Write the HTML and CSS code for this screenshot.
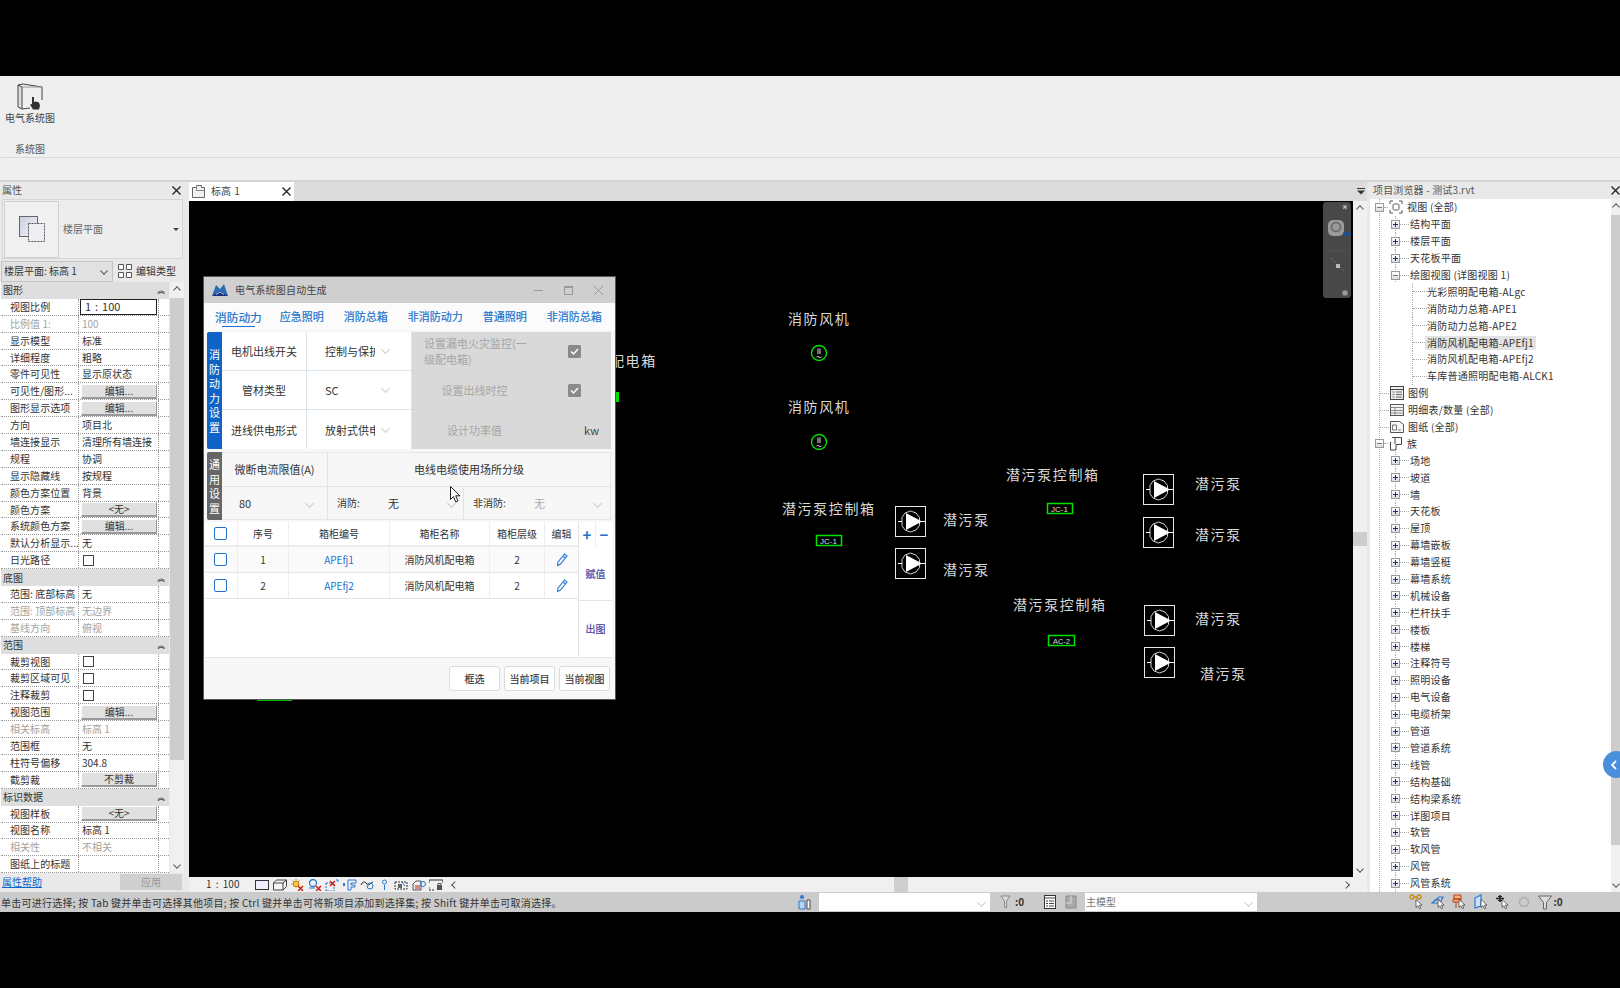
FILE: index.html
```html
<!DOCTYPE html>
<html lang="zh">
<head>
<meta charset="utf-8">
<title>电气系统图</title>
<link rel="stylesheet" href="styles.css">
</head>
<body>
<svg class="defs" width="0" height="0">
  <defs>
    <symbol id="pump" viewBox="0 0 31 31">
      <rect x=".5" y=".5" width="30" height="30" fill="#000" stroke="#e8e8e8"/>
      <path d="M15.5 5l5.5 2 3.5 4.5v8L21 24l-5.5 2-5.5-2-3-4.500v-8L10 7z" fill="none" stroke="#e8e8e8" stroke-width=".9"/>
      <path d="M11 7l16 8.500L11 24z" fill="#fff"/>
      <path d="M3 15.500h4M26 15.500h4" stroke="#fff"/>
    </symbol>
    <symbol id="motor" viewBox="0 0 18 18">
      <circle cx="9" cy="9" r="7.500" fill="none" stroke="#00e000" stroke-width="1.400"/>
      <path d="M8 4.500v5.500M10 4.500v5.500M6.500 13q1.200-1 2.500 0t2.500 0" fill="none" stroke="#ddd"/>
    </symbol>
    <symbol id="i-view" viewBox="0 0 14 14"><path d="M1 4V1h3M10 1h3v3M13 10v3h-3M4 13H1v-3" fill="none" stroke="#555"/><rect x="4" y="4" width="6" height="6" rx="1.500" fill="none" stroke="#555"/></symbol>
    <symbol id="i-legend" viewBox="0 0 14 14"><rect x=".5" y=".5" width="13" height="13" fill="#eee" stroke="#444"/><path d="M.5 3.500h13" stroke="#444"/><path d="M2.500 6h2M6 6h6M2.500 8.500h2M6 8.500h6M2.500 11h2M6 11h6" stroke="#666"/></symbol>
    <symbol id="i-sched" viewBox="0 0 14 14"><rect x=".5" y="1.500" width="13" height="11" fill="#f5f5f5" stroke="#555"/><path d="M.5 4.500h13M.5 7.500h13M.5 10h13M5 4.500v8" stroke="#888"/></symbol>
    <symbol id="i-sheet" viewBox="0 0 14 14"><path d="M.5 1.500h9l4 3v8H.5z" fill="#f7f7f7" stroke="#555"/><path d="M2.500 5h4v5h-4zM8 10h3" fill="none" stroke="#777"/></symbol>
    <symbol id="i-fam" viewBox="0 0 14 14"><path d="M3 .5h9.500v7H7V13H1.500V5" fill="#fff" stroke="#444"/><path d="M6 .5V7" stroke="#444"/></symbol>
    <symbol id="pick" viewBox="0 0 8 11"><path d="M1 .5v8l2-1.800 1.400 3 1.400-.6-1.400-3h2.600z" fill="#fff" stroke="#333" stroke-width=".7"/></symbol>
    <symbol id="check" viewBox="0 0 13 13"><rect width="13" height="13" rx="1.500" fill="#8a8a8a"/><path d="M3 6.500l2.500 2.500 4.500-5" fill="none" stroke="#fff" stroke-width="1.300"/></symbol>
    <symbol id="pen" viewBox="0 0 12 14"><path d="M8.500 1l2.500 2-6.500 8-3 1.500.4-3.300zM7 3l2.500 2" fill="none" stroke="#2a78d0" stroke-width="1.100"/></symbol>
  </defs>
</svg>

<div class="app">
  <div class="blackbar"></div>

  <header class="ribbon">
    <div class="ribbon-body">
      <div class="ribbon-tool">
        <svg class="ribbon-icon" viewBox="0 0 26 27"><path d="M1 2v22l4 2V4z" fill="#ddd" stroke="#444"/><path d="M1 2l5-1 19 3M5 26l8-1M25 4v13" fill="none" stroke="#444"/><path d="M5 4l20 0" stroke="#999"/><path d="M15 14h2v5l2-.5 3 1 1 3-1 4h-6l-3-5 2-.5z" fill="#333"/></svg>
        <span>电气系统图</span>
      </div>
    </div>
    <div class="ribbon-caption">系统图</div>
  </header>

  <div class="workspace">
    <aside class="props">
      <div class="panel-head"><span>属性</span><svg class="x" viewBox="0 0 9 9"><path d="M.5.5l8 8M8.500.5l-8 8" stroke="#222" stroke-width="1.300"/></svg></div>
      <div class="type-box">
        <div class="type-thumb">
          <svg class="type-icon" viewBox="0 0 26 26"><defs><linearGradient id="tg" x1="0" y1="0" x2="1" y2="1"><stop offset="0" stop-color="#c7cede"/><stop offset="1" stop-color="#f4f5f8"/></linearGradient></defs><rect x=".5" y=".5" width="18" height="20" fill="url(#tg)" stroke="#666"/><rect x="9.500" y="7.500" width="16" height="18" fill="#eceef2" stroke="#555" stroke-dasharray="2 1"/></svg>
        </div>
        <span class="type-name">楼层平面</span>
        <i class="tri"></i>
      </div>
      <div class="type-row">
        <div class="combo"><span>楼层平面: 标高 1</span><i class="chev"></i></div>
        <svg class="edit-icon" viewBox="0 0 14 14"><path d="M.5.5h5v5h-5zM8.500.5h5v5h-5zM.5 8.500h5v5h-5zM8.500 8.500h5v5h-5z" fill="#fff" stroke="#555"/></svg>
        <span class="edit-type">编辑类型</span>
      </div>
      <div class="props-main">
        <div class="grid">
          <div class="sec"><span>图形</span><b>︽</b></div>
          <div class="pr"><label>视图比例</label><div class="val sel">1 : 100</div></div>
          <div class="pr off"><label>比例值 1:</label><div class="val">100</div></div>
          <div class="pr"><label>显示模型</label><div class="val">标准</div></div>
          <div class="pr"><label>详细程度</label><div class="val">粗略</div></div>
          <div class="pr"><label>零件可见性</label><div class="val">显示原状态</div></div>
          <div class="pr"><label>可见性/图形...</label><div class="val"><button>编辑...</button></div></div>
          <div class="pr"><label>图形显示选项</label><div class="val"><button>编辑...</button></div></div>
          <div class="pr"><label>方向</label><div class="val">项目北</div></div>
          <div class="pr"><label>墙连接显示</label><div class="val">清理所有墙连接</div></div>
          <div class="pr"><label>规程</label><div class="val">协调</div></div>
          <div class="pr"><label>显示隐藏线</label><div class="val">按规程</div></div>
          <div class="pr"><label>颜色方案位置</label><div class="val">背景</div></div>
          <div class="pr"><label>颜色方案</label><div class="val"><button>&lt;无&gt;</button></div></div>
          <div class="pr"><label>系统颜色方案</label><div class="val"><button>编辑...</button></div></div>
          <div class="pr"><label>默认分析显示...</label><div class="val">无</div></div>
          <div class="pr"><label>日光路径</label><div class="val"><i class="cb"></i></div></div>
          <div class="sec"><span>底图</span><b>︽</b></div>
          <div class="pr"><label>范围: 底部标高</label><div class="val">无</div></div>
          <div class="pr off"><label>范围: 顶部标高</label><div class="val">无边界</div></div>
          <div class="pr off"><label>基线方向</label><div class="val">俯视</div></div>
          <div class="sec"><span>范围</span><b>︽</b></div>
          <div class="pr"><label>裁剪视图</label><div class="val"><i class="cb"></i></div></div>
          <div class="pr"><label>裁剪区域可见</label><div class="val"><i class="cb"></i></div></div>
          <div class="pr"><label>注释裁剪</label><div class="val"><i class="cb"></i></div></div>
          <div class="pr"><label>视图范围</label><div class="val"><button>编辑...</button></div></div>
          <div class="pr off"><label>相关标高</label><div class="val">标高 1</div></div>
          <div class="pr"><label>范围框</label><div class="val">无</div></div>
          <div class="pr"><label>柱符号偏移</label><div class="val">304.8</div></div>
          <div class="pr"><label>截剪裁</label><div class="val"><button>不剪裁</button></div></div>
          <div class="sec"><span>标识数据</span><b>︽</b></div>
          <div class="pr"><label>视图样板</label><div class="val"><button>&lt;无&gt;</button></div></div>
          <div class="pr"><label>视图名称</label><div class="val">标高 1</div></div>
          <div class="pr off"><label>相关性</label><div class="val">不相关</div></div>
          <div class="pr"><label>图纸上的标题</label><div class="val"></div></div>
        </div>
        <div class="scroll props-scroll">
          <i class="chev up"></i>
          <div class="props-thumb"></div>
          <i class="chev"></i>
        </div>
      </div>
      <div class="props-foot"><a>属性帮助</a><span class="apply">应用</span></div>
    </aside>

    <main class="center">
      <div class="tabbar">
        <div class="tab">
          <svg class="tab-icon" viewBox="0 0 13 13"><path d="M.5 2.500h4v-2h5v2h3v10H.5z" fill="#eef0f4" stroke="#666"/><path d="M4.500.5v5h8" fill="none" stroke="#888"/></svg>
          <span>标高 1</span>
          <svg class="x" viewBox="0 0 9 9"><path d="M.5.5l8 8M8.500.5l-8 8" stroke="#222" stroke-width="1.300"/></svg>
        </div>
        <svg class="tab-menu" viewBox="0 0 8 7"><path d="M0 .5h8" stroke="#333"/><path d="M0 2.500h8L4 6.500z" fill="#333"/></svg>
      </div>
      <div class="view-row">
        <div class="canvas">
          <svg class="drawing" viewBox="189 201 1164 676">
            <g class="cad">
              <text x="610" y="366">配电箱</text>
              <text x="788" y="324">消防风机</text>
              <text x="788" y="412">消防风机</text>
              <text x="782" y="514">潜污泵控制箱</text>
              <text x="1006" y="480">潜污泵控制箱</text>
              <text x="1013" y="610">潜污泵控制箱</text>
              <text x="943" y="525">潜污泵</text>
              <text x="943" y="575">潜污泵</text>
              <text x="1195" y="489">潜污泵</text>
              <text x="1195" y="540">潜污泵</text>
              <text x="1195" y="624">潜污泵</text>
              <text x="1200" y="679">潜污泵</text>
            </g>
            <rect x="615" y="392" width="4" height="10" fill="#00e000"/>
            <rect x="257" y="699" width="35" height="2" fill="#00c000"/>
            <use href="#motor" x="810" y="344" width="18" height="18"/>
            <use href="#motor" x="810" y="433" width="18" height="18"/>
            <g class="tagbox">
              <rect x="816.500" y="535.500" width="25" height="10"/>
              <rect x="1047.500" y="503.500" width="25" height="10"/>
              <rect x="1048.500" y="635.500" width="26" height="10"/>
            </g>
            <g class="tagtext">
              <text x="820" y="544" textLength="17" lengthAdjust="spacingAndGlyphs">JC-1</text>
              <text x="1051" y="512" textLength="17" lengthAdjust="spacingAndGlyphs">JC-1</text>
              <text x="1053" y="644" textLength="17" lengthAdjust="spacingAndGlyphs">AC-2</text>
            </g>
            <use href="#pump" x="895" y="506" width="31" height="31"/>
            <use href="#pump" x="895" y="548" width="31" height="31"/>
            <use href="#pump" x="1143" y="474" width="31" height="31"/>
            <use href="#pump" x="1143" y="517" width="31" height="31"/>
            <use href="#pump" x="1144" y="605" width="31" height="31"/>
            <use href="#pump" x="1144" y="647" width="31" height="31"/>
          </svg>

          <div class="navwheel">
            <svg viewBox="0 0 28 96"><circle cx="22" cy="5" r="2.500" fill="#777"/><path d="M20.500 3.500l3 3M23.500 3.500l-3 3" stroke="#ddd" stroke-width=".7"/><rect x="5" y="18" width="16" height="16" rx="5" fill="#9a9a9a"/><circle cx="13" cy="25" r="4.500" fill="none" stroke="#666" stroke-width="1.500"/><path d="M20 32h8" stroke="#1c4f9a" stroke-width="3"/><path d="M4 49h20" stroke="#555"/><path d="M8 56l14 14" stroke="#777" stroke-dasharray="2 2"/><rect x="13" y="62" width="4" height="4" fill="#bbb"/><circle cx="22" cy="91" r="3" fill="#777"/><path d="M20 90h4M20 92h4" stroke="#ddd" stroke-width=".7"/></svg>
          </div>

          <section class="dialog">
            <div class="dlg-title">
              <svg class="dlg-logo" viewBox="0 0 16 13"><path d="M0 12L4 1l4 4 4-5 4 12z" fill="#2a6db5"/><path d="M0 12l8-5 8 5z" fill="#1d2f80"/><path d="M4 10.500l4-2.500 4 2.500" fill="none" stroke="#fff" stroke-width=".7"/></svg>
              <span class="dlg-name">电气系统图自动生成</span>
              <svg class="win-btn" viewBox="0 0 9 9"><path d="M0 4.500h9" stroke="#999"/></svg>
              <svg class="win-btn" viewBox="0 0 9 9"><rect x=".5" y=".5" width="8" height="8" fill="none" stroke="#999"/><path d="M.5 1.500h8" stroke="#999"/></svg>
              <svg class="win-btn" viewBox="0 0 9 9"><path d="M0 0l9 9M9 0L0 9" stroke="#999"/></svg>
            </div>
            <nav class="dlg-tabs">
              <a class="active">消防动力</a><a>应急照明</a><a>消防总箱</a><a>非消防动力</a><a>普通照明</a><a>非消防总箱</a>
            </nav>
            <div class="sec1">
              <div class="strip blue"><span>消</span><span>防</span><span>动</span><span>力</span><span>设</span><span>置</span></div>
              <div class="cell">电机出线开关</div>
              <div class="cell sel-cell"><span class="clip">控制与保护</span><i class="chev light"></i></div>
              <div class="cell dis left">设置漏电火灾监控(一级配电箱)</div>
              <div class="cell dis"><svg class="chk" viewBox="0 0 13 13"><use href="#check"/></svg></div>
              <div class="cell">管材类型</div>
              <div class="cell sel-cell"><span class="clip">SC</span><i class="chev light"></i></div>
              <div class="cell dis">设置出线时控</div>
              <div class="cell dis"><svg class="chk" viewBox="0 0 13 13"><use href="#check"/></svg></div>
              <div class="cell">进线供电形式</div>
              <div class="cell sel-cell"><span class="clip">放射式供电</span><i class="chev light"></i></div>
              <div class="cell dis">设计功率值</div>
              <div class="cell dis kw">kw</div>
            </div>
            <div class="sec2">
              <div class="strip gray"><span>通</span><span>用</span><span>设</span><span>置</span></div>
              <div class="g-body">
                <div class="g-top">
                  <div class="gc c1">微断电流限值(A)</div>
                  <div class="gc c2">电线电缆使用场所分级</div>
                </div>
                <div class="g-bot">
                  <div class="gc c1 num"><span>80</span><i class="chev light"></i></div>
                  <div class="gc c3"><small>消防:</small><span>无</span><i class="chev light"></i></div>
                  <div class="gc c4"><small>非消防:</small><span class="fade">无</span><i class="chev light"></i></div>
                </div>
              </div>
            </div>
            <div class="tbl">
              <div class="tbl-main">
                <div class="tr th"><div><i class="bluecb"></i></div><div>序号</div><div>箱柜编号</div><div>箱柜名称</div><div>箱柜层级</div><div>编辑</div></div>
                <div class="tr alt"><div><i class="bluecb"></i></div><div>1</div><div class="lnk">APEfj1</div><div>消防风机配电箱</div><div>2</div><div><svg class="pen" viewBox="0 0 12 14"><use href="#pen"/></svg></div></div>
                <div class="tr"><div><i class="bluecb"></i></div><div>2</div><div class="lnk">APEfj2</div><div>消防风机配电箱</div><div>2</div><div><svg class="pen" viewBox="0 0 12 14"><use href="#pen"/></svg></div></div>
              </div>
              <div class="tbl-side">
                <div class="pm"><span>+</span><span>−</span></div>
                <div class="act a1">赋值</div>
                <div class="act a2">出图</div>
              </div>
            </div>
            <div class="dlg-foot"><button>框选</button><button>当前项目</button><button>当前视图</button></div>
            <svg class="cursor" viewBox="0 0 11 17"><path d="M.5.500v13l3-3 2.200 5.500 2.300-1-2.300-5.200h4.300z" fill="#fff" stroke="#222"/></svg>
          </section>
        </div>
        <div class="scroll v-scroll"><i class="chev up"></i><div class="v-thumb"></div><i class="chev"></i></div>
      </div>
      <div class="viewbar">
        <span class="scale">1 : 100</span>
        <div class="vb-icons">
          <svg viewBox="0 0 14 10"><rect x=".5" y=".5" width="13" height="9" fill="#eef" stroke="#333"/></svg>
          <svg viewBox="0 0 14 11"><path d="M.5 3.500h9.500v7H.5zM.5 3.500l3-3h10l-3.500 3M10 10.500l3.500-3.500V.5" fill="#f4f4f4" stroke="#444"/></svg>
          <svg viewBox="0 0 14 12"><circle cx="6" cy="5" r="3" fill="#f6c445" stroke="#c08000"/><path d="M6 0v1M1 5h1M2.500 1.500l1 1M9.500 1.500l-1 1" stroke="#c08000"/><path d="M8 7l5 5M13 7l-5 5" stroke="#d02010" stroke-width="1.500"/></svg>
          <svg viewBox="0 0 14 12"><circle cx="5" cy="4" r="3.500" fill="none" stroke="#2a78d0" stroke-width="1.300"/><path d="M1 9h6" stroke="#2a78d0"/><path d="M8 7l5 5M13 7l-5 5" stroke="#d02010" stroke-width="1.500"/></svg>
          <svg viewBox="0 0 14 12"><path d="M1 4h8v8H1z" fill="none" stroke="#2a78d0" stroke-dasharray="2 1"/><path d="M5 2l5 5M10 2l-5 5" stroke="#d02010" stroke-width="1.500"/><path d="M11 1h2v2" stroke="#2a78d0" fill="none"/></svg>
          <svg viewBox="0 0 14 12"><path d="M0 4h2v3H0z" fill="#2a78d0"/><path d="M5 1h8v3h-5v2h4v2h-4v3H5z" fill="none" stroke="#2a78d0"/></svg>
          <svg viewBox="0 0 14 12"><path d="M1 6q2-5 5-2t3 2 4-3" fill="none" stroke="#333"/><circle cx="10" cy="7" r="3" fill="none" stroke="#2a78d0"/></svg>
          <svg class="narrow" viewBox="0 0 5 12"><path d="M2.500 11V6" stroke="#2a78d0"/><circle cx="2.500" cy="3" r="2" fill="none" stroke="#2a78d0"/></svg>
          <svg viewBox="0 0 14 12"><path d="M1 3h12v7H1z" fill="none" stroke="#333" stroke-dasharray="2 1"/><path d="M4 5h4v4H4z" fill="#666"/><path d="M8 3l3 4" stroke="#2a78d0"/></svg>
          <svg viewBox="0 0 14 12"><path d="M1 11V5l3-3h5v9z" fill="none" stroke="#555"/><path d="M3 7h5M3 9h5" stroke="#c02010"/><circle cx="11" cy="5" r="2.500" fill="none" stroke="#2a78d0"/></svg>
          <svg viewBox="0 0 14 12"><path d="M0 1h14M0 1v3M14 1v3" fill="none" stroke="#333"/><path d="M0 8v3h5" stroke="#333" fill="none" stroke-dasharray="2 1"/><rect x="8" y="6" width="5" height="5" fill="#555"/><path d="M9 6V4.500h3V6" fill="none" stroke="#555"/></svg>
        </div>
        <i class="chev left"></i>
        <div class="h-track"><div class="h-thumb"></div></div>
        <i class="chev right"></i>
      </div>
    </main>

    <aside class="browser">
      <div class="br-head"><span>项目浏览器 - 测试3.rvt</span><svg class="x" viewBox="0 0 9 9"><path d="M.5.5l8 8M8.500.5l-8 8" stroke="#222" stroke-width="1.300"/></svg></div>
      <div class="br-body">
        <div class="tree">
          <div class="node n1"><i class="tog minus"></i><i class="dash s"></i><svg class="ti" viewBox="0 0 14 14"><use href="#i-view"/></svg><span>视图 (全部)</span></div>
          <div class="node n2"><i class="tog"></i><i class="dash"></i><span>结构平面</span></div>
          <div class="node n2"><i class="tog"></i><i class="dash"></i><span>楼层平面</span></div>
          <div class="node n2"><i class="tog"></i><i class="dash"></i><span>天花板平面</span></div>
          <div class="node n2"><i class="tog minus"></i><i class="dash"></i><span>绘图视图 (详图视图 1)</span></div>
          <div class="node n3"><i class="dash long"></i><span>光彩照明配电箱-ALgc</span></div>
          <div class="node n3"><i class="dash long"></i><span>消防动力总箱-APE1</span></div>
          <div class="node n3"><i class="dash long"></i><span>消防动力总箱-APE2</span></div>
          <div class="node n3"><i class="dash long"></i><span class="hl">消防风机配电箱-APEfj1</span></div>
          <div class="node n3"><i class="dash long"></i><span>消防风机配电箱-APEfj2</span></div>
          <div class="node n3"><i class="dash long"></i><span>车库普通照明配电箱-ALCK1</span></div>
          <div class="node n0"><i class="dash w"></i><svg class="ti" viewBox="0 0 14 14"><use href="#i-legend"/></svg><span>图例</span></div>
          <div class="node n0"><i class="dash w"></i><svg class="ti" viewBox="0 0 14 14"><use href="#i-sched"/></svg><span>明细表/数量 (全部)</span></div>
          <div class="node n0"><i class="dash w"></i><svg class="ti" viewBox="0 0 14 14"><use href="#i-sheet"/></svg><span>图纸 (全部)</span></div>
          <div class="node n1"><i class="tog minus"></i><i class="dash s"></i><svg class="ti" viewBox="0 0 14 14"><use href="#i-fam"/></svg><span>族</span></div>
          <div class="node n2"><i class="tog"></i><i class="dash"></i><span>场地</span></div>
          <div class="node n2"><i class="tog"></i><i class="dash"></i><span>坡道</span></div>
          <div class="node n2"><i class="tog"></i><i class="dash"></i><span>墙</span></div>
          <div class="node n2"><i class="tog"></i><i class="dash"></i><span>天花板</span></div>
          <div class="node n2"><i class="tog"></i><i class="dash"></i><span>屋顶</span></div>
          <div class="node n2"><i class="tog"></i><i class="dash"></i><span>幕墙嵌板</span></div>
          <div class="node n2"><i class="tog"></i><i class="dash"></i><span>幕墙竖梃</span></div>
          <div class="node n2"><i class="tog"></i><i class="dash"></i><span>幕墙系统</span></div>
          <div class="node n2"><i class="tog"></i><i class="dash"></i><span>机械设备</span></div>
          <div class="node n2"><i class="tog"></i><i class="dash"></i><span>栏杆扶手</span></div>
          <div class="node n2"><i class="tog"></i><i class="dash"></i><span>楼板</span></div>
          <div class="node n2"><i class="tog"></i><i class="dash"></i><span>楼梯</span></div>
          <div class="node n2"><i class="tog"></i><i class="dash"></i><span>注释符号</span></div>
          <div class="node n2"><i class="tog"></i><i class="dash"></i><span>照明设备</span></div>
          <div class="node n2"><i class="tog"></i><i class="dash"></i><span>电气设备</span></div>
          <div class="node n2"><i class="tog"></i><i class="dash"></i><span>电缆桥架</span></div>
          <div class="node n2"><i class="tog"></i><i class="dash"></i><span>管道</span></div>
          <div class="node n2"><i class="tog"></i><i class="dash"></i><span>管道系统</span></div>
          <div class="node n2"><i class="tog"></i><i class="dash"></i><span>线管</span></div>
          <div class="node n2"><i class="tog"></i><i class="dash"></i><span>结构基础</span></div>
          <div class="node n2"><i class="tog"></i><i class="dash"></i><span>结构梁系统</span></div>
          <div class="node n2"><i class="tog"></i><i class="dash"></i><span>详图项目</span></div>
          <div class="node n2"><i class="tog"></i><i class="dash"></i><span>软管</span></div>
          <div class="node n2"><i class="tog"></i><i class="dash"></i><span>软风管</span></div>
          <div class="node n2"><i class="tog"></i><i class="dash"></i><span>风管</span></div>
          <div class="node n2"><i class="tog"></i><i class="dash"></i><span>风管系统</span></div>
        </div>
        <div class="scroll br-scroll"><i class="chev up"></i><div class="br-thumb"></div><i class="chev"></i></div>
      </div>
    </aside>
  </div>

  <footer class="status">
    <span class="hint">单击可进行选择; 按 Tab 键并单击可选择其他项目; 按 Ctrl 键并单击可将新项目添加到选择集; 按 Shift 键并单击可取消选择。</span>
    <svg class="st-i work" viewBox="0 0 14 16"><circle cx="5" cy="3" r="2" fill="#2a78d0"/><path d="M2 15V7h6v8z" fill="#bcd4ee" stroke="#2a78d0"/><path d="M10 6h3v9h-3z" fill="#fff" stroke="#444"/></svg>
    <div class="st-input w1"><i class="chev light"></i></div>
    <svg class="st-i f1" viewBox="0 0 11 14"><path d="M1 1h9l-3.500 5v7L4.500 12V6z" fill="#ddd" stroke="#888"/></svg>
    <span class="st-n s1">:0</span>
    <svg class="st-i d1" viewBox="0 0 12 14"><rect x=".5" y=".5" width="11" height="13" fill="#fff" stroke="#333"/><path d="M.5 3h11M2 6h2M5 6h5M2 8.500h2M5 8.500h5M2 11h2M5 11h5" stroke="#444"/></svg>
    <svg class="st-i d2" viewBox="0 0 12 14"><path d="M1 1h10v12H1z" fill="#aaa" stroke="#888"/><path d="M6 1v7H1" stroke="#ddd" fill="none"/></svg>
    <div class="st-input w2"><span>主模型</span><i class="chev light"></i></div>
    <div class="st-right">
      <svg viewBox="0 0 14 16"><path d="M1 3a2 2 0 0 1 4 0 2 2 0 0 1-4 0zM8 3a2 2 0 0 1 4 0 2 2 0 0 1-4 0zM5 3h3" fill="none" stroke="#c98a10" stroke-width="1.300"/><use href="#pick" x="6" y="5" width="8" height="11"/></svg>
      <svg viewBox="0 0 14 16"><path d="M1 9l7-6h4l-3 6zM1 9h8M3 6h6" fill="none" stroke="#2a78d0" stroke-width="1.200"/><use href="#pick" x="6" y="5" width="8" height="11"/></svg>
      <svg viewBox="0 0 14 16"><path d="M2 1h7v4H2zM1 5h8v3H1zM4 8v6" fill="#f3b67a" stroke="#c0401a"/><use href="#pick" x="6" y="5" width="8" height="11"/></svg>
      <svg viewBox="0 0 14 16"><path d="M1 4l6-3v11l-6 2z" fill="#cfe0f4" stroke="#2a78d0" stroke-width="1.200"/><use href="#pick" x="6" y="5" width="8" height="11"/></svg>
      <svg viewBox="0 0 14 16"><path d="M5 1v7M1 4.500h8" stroke="#222" stroke-width="1.500"/><path d="M3 2.500h4M3 6.500h4" stroke="#222"/><use href="#pick" x="6" y="5" width="8" height="11"/></svg>
      <svg viewBox="0 0 14 16"><circle cx="7" cy="8" r="4.500" fill="none" stroke="#aaa" stroke-width="2" stroke-dasharray="2 1"/></svg>
      <svg viewBox="0 0 14 16"><path d="M.5 2h13L8.500 8.500V15H5.500V8.500z" fill="#ddd" stroke="#666"/></svg>
      <span class="st-n">:0</span>
    </div>
  </footer>

  <div class="blackbar bottom"></div>

  <div class="sidetab"><svg viewBox="0 0 6 10"><path d="M5 1L1 5l4 4" fill="none" stroke="#fff" stroke-width="1.800"/></svg></div>
</div>
</body>
</html>
```
FILE: styles.css
```css
* { box-sizing: border-box; }
html, body { margin: 0; padding: 0; height: 100%; background: #000; overflow: hidden; }
body { font-family: "Noto Sans CJK SC", "Noto Sans", sans-serif; font-size: 10px; line-height: 1; color: #333; }
i { display: block; font-style: normal; }
button { font: inherit; color: inherit; }
.defs { position: absolute; }

.app { position: relative; width: 1620px; height: 988px; display: flex; flex-direction: column; }
.blackbar { height: 76px; background: #000; flex: none; }

/* ribbon */
.ribbon { height: 104px; flex: none; background: #efefef; }
.ribbon-body { height: 82px; border-bottom: 1px solid #d8d8d8; position: relative; }
.ribbon-tool { width: 60px; display: flex; flex-direction: column; align-items: center; padding-top: 7px; color: #444; }
.ribbon-icon { width: 26px; height: 27px; margin-bottom: 3px; }
.ribbon-tool span { font-size: 10px; }
.ribbon-caption { position: absolute; top: 144px; left: 15px; color: #555; }

/* workspace */
.workspace { height: 712px; flex: none; display: flex; background: #e9e9e9; border-top: 2px solid #d4d4d4; }
.x { width: 9px; height: 9px; flex: none; }

/* properties */
.props { width: 184px; flex: none; display: flex; flex-direction: column; }
.panel-head { height: 17px; display: flex; align-items: center; justify-content: space-between; padding: 0 3px 1px 2px; color: #555; }
.type-box { height: 60px; margin: 0 1px 0 2px; display: flex; align-items: center; background: #ededed; border: 1px solid #d6d6d6; }
.type-thumb { width: 55px; height: 57px; margin-left: 1px; display: flex; align-items: center; justify-content: center; background: #f0f0f0; border: 1px solid #d0d0d0; }
.type-icon { width: 26px; height: 26px; }
.type-name { margin-left: 4px; color: #666; flex: 1; }
.tri { width: 0; height: 0; border: 3px solid transparent; border-top: 3px solid #444; border-bottom: 0; margin-right: 3px; }
.type-row { height: 23px; padding: 1px 0 0 1px; display: flex; align-items: center; }
.combo { width: 112px; height: 21px; background: #e1e1e1; border: 1px solid #c4c4c4; display: flex; align-items: center; justify-content: space-between; padding: 0 5px 0 2px; color: #333; }
.edit-icon { width: 14px; height: 14px; margin-left: 5px; }
.edit-type { margin-left: 4px; color: #333; }

.chev { width: 6px; height: 6px; flex: none; border-right: 1.300px solid #444; border-bottom: 1.300px solid #444; transform: rotate(45deg) scale(.9); }
.chev.up { transform: rotate(225deg) scale(.9); }
.chev.left { transform: rotate(135deg) scale(.9); }
.chev.right { transform: rotate(-45deg) scale(.9); }
.chev.light { border-color: #c4ccd6; border-width: 1px; width: 7px; height: 7px; }

.props-main { height: 591px; display: flex; }
.grid { width: 169px; flex: none; background: #fff; padding-left: 1px; }
.sec { height: 16.900px; background: #dedede; display: flex; align-items: center; justify-content: space-between; padding: 0 4px 0 2px; color: #333; }
.sec b { font-size: 8px; font-weight: 700; transform: scaleX(.9); }
.pr { height: 16.900px; display: grid; grid-template-columns: 78px 79px 11px; border-bottom: 1px dotted #999; }
.pr::after { content: ""; border-left: 1px dotted #999; }
.pr label { padding-left: 9px; display: flex; align-items: center; border-right: 1px dotted #999; white-space: nowrap; overflow: hidden; letter-spacing: .05px; }
.pr .val { padding-left: 3px; display: flex; align-items: center; white-space: nowrap; overflow: hidden; }
.pr .val button { width: 76px; height: 15px; margin-left: -1px; padding: 0; background: #e0e0e0; border: 1px solid #fff; border-right-color: #999; border-bottom: 2px solid #999; text-align: center; }
.pr .val.sel { border: 1.500px solid #222; margin-left: 1px; margin-right: 1px; padding-left: 4px; font-size: 11px; word-spacing: 1.500px; }
.pr.off { color: #a2a2a2; }
.cb { width: 11px; height: 11px; border: 1px solid #444; background: #fff; margin-left: 1px; }

.scroll { display: flex; flex-direction: column; align-items: center; background: #f0f0f0; flex: none; }
.props-scroll { width: 14px; margin-left: 1px; padding: 5px 0; }
.props-thumb { width: 14px; height: 462px; background: #cdcdcd; margin: 5px 0 auto; }

.props-foot { height: 18px; display: flex; align-items: center; justify-content: space-between; padding: 0 2px 1px; }
.props-foot a { color: #0a6ad0; text-decoration: underline; }
.apply { width: 62px; height: 16px; background: #cfcfcf; display: flex; align-items: center; justify-content: center; color: #999; }

/* centre */
.center { flex: 1; min-width: 0; display: flex; flex-direction: column; padding-left: 5px; padding-right: 3px; }
.tabbar { height: 19px; flex: none; background: #dcdcdc; display: flex; align-items: stretch; justify-content: space-between; }
.tab { width: 105px; background: #fff; display: flex; align-items: center; padding: 0 3px 1px 3px; color: #444; }
.tab-icon { width: 13px; height: 13px; margin-right: 6px; }
.tab span { flex: 1; font-size: 10px; word-spacing: 1px; }
.tab-menu { width: 8px; height: 7px; align-self: center; margin-right: 2px; }
.view-row { height: 676px; flex: none; display: flex; }
.canvas { position: relative; width: 1164px; flex: none; background: #000; }
.drawing { display: block; width: 1164px; height: 676px; }
.cad text { fill: #d9d9d9; font-size: 14px; letter-spacing: 1.600px; font-family: "Noto Sans CJK SC", sans-serif; }
.tagbox rect { fill: none; stroke: #00e000; stroke-width: 1.500; }
.tagtext text { fill: #ddd; font-size: 8px; font-family: "Liberation Sans", sans-serif; }
.navwheel { position: absolute; top: 1px; right: 2px; width: 28px; height: 96px; background: #484848; border-radius: 3px; }
.navwheel svg { display: block; width: 28px; height: 96px; }
.v-scroll { width: 14px; padding: 5px 0; }
.v-thumb { width: 14px; height: 14px; background: #cdcdcd; margin: 320px 0 auto; }

.viewbar { height: 15px; flex: none; display: flex; align-items: center; background: #f0f0f0; }
.scale { width: 66px; padding: 0 0 1px 17px; color: #333; word-spacing: 2px; white-space: nowrap; }
.vb-icons { display: flex; align-items: center; gap: 3.500px; }
.vb-icons svg { width: 14px; height: 12px; }
.vb-icons svg.narrow { width: 5px; margin: 0 4px; }
.viewbar .chev.left { margin-left: 9px; }
.h-track { flex: 1; height: 15px; position: relative; margin-right: 9px; display: flex; padding-left: 436px; }
.h-thumb { width: 14px; height: 15px; background: #cfcfcf; }
.viewbar .chev.right { margin-right: 18px; }

/* dialog */
.dialog { position: absolute; left: 15px; top: 76px; width: 411px; height: 422px; background: #f7f7f7; display: flex; flex-direction: column; color: #333; box-shadow: 0 0 0 1px #555; }
.dlg-title { height: 26px; flex: none; background: #cfcfcf; display: flex; align-items: center; padding: 0 12px 0 8px; }
.dlg-logo { width: 16px; height: 13px; margin-right: 7px; }
.dlg-name { flex: 1; color: #444; letter-spacing: .2px; }
.win-btn { width: 9px; height: 9px; margin-left: 21px; }
.dlg-tabs { height: 27px; flex: none; display: flex; padding: 0 0 0 11px; align-items: center; background: #fbfbfb; margin-bottom: 2px; }
.dlg-tabs a { flex: none; white-space: nowrap; color: #2272cc; font-size: 11px; -webkit-text-stroke: .2px #2272cc; margin-right: 20px; position: relative; }
.dlg-tabs a.active { font-size: 11.700px; margin-right: 18px; }
.dlg-tabs a.active::after { content: ""; position: absolute; left: 7px; right: 7px; bottom: -5px; height: 1.500px; background: #2272cc; }

.sec1 { height: 117px; flex: none; margin: 0 4px 0 3px; display: grid; grid-template-columns: 15px 85px 105px 126px 73px; grid-template-rows: repeat(3, 39px); }
.strip { display: flex; flex-direction: column; align-items: center; justify-content: center; color: #fff; font-size: 11px; line-height: 14.500px; border-radius: 2px 0 0 2px; }
.strip.blue { grid-row: 1 / 4; background: #0f63c4; }
.strip.gray { background: #666; width: 15px; flex: none; }
.cell { display: flex; align-items: center; justify-content: center; background: #fff; border-right: 1px solid #d8e4ee; border-bottom: 1px solid #d8e4ee; font-size: 11px; color: #333; text-align: center; line-height: 16px; }
.cell:nth-last-child(-n+4) { border-bottom: 0; }
.sel-cell { justify-content: flex-start; padding-left: 18px; }
.clip { width: 50px; overflow: hidden; white-space: nowrap; text-align: left; }
.sel-cell .chev { margin-left: 7px; margin-top: -3px; }
.cell.dis { background: #d9d9d9; color: #a5a5a5; border-color: #d2d6da; }
.cell.left { justify-content: flex-start; text-align: left; padding: 0 10px 0 12px; }
.chk { width: 13px; height: 13px; }
.cell.kw { justify-content: flex-end; color: #444; padding-right: 11px; }

.sec2 { height: 68px; flex: none; margin: 3px 4px 0 3px; display: flex; }
.g-body { flex: 1; display: flex; flex-direction: column; border: 1px solid #e2e8ee; border-left: 0; }
.g-top { height: 34px; display: flex; border-bottom: 1px solid #dbe5ee; }
.g-bot { flex: 1; display: flex; }
.gc { display: flex; align-items: center; justify-content: center; border-right: 1px solid #dbe5ee; font-size: 11px; }
.c1 { width: 106px; }
.c2 { flex: 1; border-right: 0; }
.num { justify-content: space-between; padding: 0 14px 0 17px; }
.c3 { width: 136px; padding: 0 8px 0 9px; }
.c4 { flex: 1; border-right: 0; padding: 0 9px; }
.gc small { font-size: 10px; width: 51px; }
.c4 small { width: 61px; }
.gc span { flex: none; }
.c3 span, .c4 span { flex: 1; }
.fade { color: #aaa; }

.tbl { height: 136px; flex: none; margin: 2px 3px 0 1px; display: flex; background: #fff; border-bottom: 1px solid #e4e4e4; }
.tbl-main { width: 373px; flex: none; }
.tr { display: grid; grid-template-columns: 33px 51px 101px 100px 55px 33px; height: 26px; border-bottom: 1px solid #e4e4e4; font-size: 10px; color: #333; }
.tr.th { height: 25px; border-bottom: 2px solid #ececec; }
.tr.alt { background: #fafafa; }
.tr > div { display: flex; align-items: center; justify-content: center; border-right: 1px solid #eee; }
.tr > div:last-child { border-right: 0; }
.lnk { color: #2272cc; }
.bluecb { width: 13px; height: 13px; border: 1.300px solid #2272cc; border-radius: 2px; background: #fff; margin-left: -2px; }
.pen { width: 12px; height: 14px; }
.tbl-side { flex: 1; border-left: 1px solid #e4e4e4; display: flex; flex-direction: column; }
.pm { height: 25px; display: flex; color: #2272cc; font-size: 15px; font-weight: 700; }
.pm span { flex: 1; display: flex; align-items: center; justify-content: center; }
.pm span:first-child { border-right: 1px solid #eee; }
.act { display: flex; align-items: center; justify-content: center; color: #4b3f9e; -webkit-text-stroke: .2px #4b3f9e; }
.a1 { height: 54px; border-bottom: 1px solid #e4e4e4; }
.a2 { flex: 1; }
.dlg-foot { flex: 1; display: flex; align-items: center; justify-content: flex-end; gap: 4px; padding: 0 5px 0 0; }
.dlg-foot button { width: 51px; height: 25px; padding: 0; background: #fff; border: 1px solid #dcdcdc; border-radius: 3px; font-size: 10px; color: #333; -webkit-text-stroke: .15px #333; }
.cursor { position: absolute; left: 246px; top: 209px; width: 11px; height: 17px; }

/* browser */
.browser { width: 250px; flex: none; display: flex; flex-direction: column; }
.br-head { height: 17px; flex: none; display: flex; align-items: center; justify-content: space-between; padding: 0 0 1px 3px; color: #555; letter-spacing: .15px; }
.br-body { flex: 1; min-height: 0; display: flex; background: #fff; }
.tree { width: 241px; flex: none; overflow: hidden; background: repeating-linear-gradient(#aaa 0 1px, transparent 1px 2px) 9px 0 / 1px 100% no-repeat #fff; color: #333; letter-spacing: .25px; }
.node { height: 16.900px; display: flex; align-items: center; white-space: nowrap; }
.n1 { padding-left: 5px; }
.n0 { padding-left: 10px; }
.n2 { padding-left: 21px; background: repeating-linear-gradient(#aaa 0 1px, transparent 1px 2px) 25px 0 / 1px 100% no-repeat; }
.n3 { padding-left: 43px; background: repeating-linear-gradient(#aaa 0 1px, transparent 1px 2px) 42px 0 / 1px 100% no-repeat; }
.tog { width: 9px; height: 9px; flex: none; border: 1px solid #999; background: linear-gradient(#fff, #d8dce4); position: relative; }
.tog::before { content: ""; position: absolute; left: 1px; right: 1px; top: 3px; height: 1px; background: #1d2f70; }
.tog::after { content: ""; position: absolute; top: 1px; bottom: 1px; left: 3px; width: 1px; background: #1d2f70; }
.tog.minus::before { background: #777; }
.tog.minus::after { display: none; }
.dash { width: 9px; height: 0; flex: none; border-top: 1px dotted #aaa; margin-right: 1px; }
.dash.s { width: 4px; }
.dash.long { width: 14px; margin-right: 0; }
.ti { width: 14px; height: 14px; flex: none; margin-right: 4px; }
.hl { background: #e3e3e3; padding: 2px; margin: 0 -2px; }
.br-scroll { width: 9px; padding: 5px 0; overflow: hidden; }
.br-thumb { width: 9px; height: 630px; background: #cdcdcd; margin: 5px 0 auto; }

/* status */
.status { height: 20px; flex: none; background: #cbcbcb; display: flex; align-items: center; color: #333; }
.hint { width: 796px; flex: none; padding: 2px 0 0 1px; white-space: nowrap; letter-spacing: .24px; }
.st-i { flex: none; }
.work { width: 14px; height: 16px; margin-left: 1px; }
.st-input { background: #fff; height: 18px; display: flex; align-items: center; justify-content: space-between; padding: 0 5px 0 1px; color: #777; flex: none; }
.w1 { width: 171px; margin-left: 8px; justify-content: flex-end; }
.f1 { width: 11px; height: 14px; margin-left: 10px; }
.st-n { margin-left: 1px; font-weight: 700; width: 12px; color: #333; }
.st-n.s1 { margin-left: 4px; }
.d1 { width: 12px; height: 14px; margin-left: 17px; }
.d2 { width: 12px; height: 14px; margin-left: 9px; }
.w2 { width: 172px; margin-left: 8px; }
.st-right { display: flex; align-items: center; gap: 7.500px; margin-left: 152px; }
.st-right svg { width: 14px; height: 16px; flex: none; }
.st-right .st-n { margin-left: -6px; }

.blackbar.bottom { flex: 1; height: auto; }
.sidetab { position: absolute; left: 1603px; top: 751px; width: 27px; height: 27px; border-radius: 50%; background: #4a8fdc; display: flex; align-items: center; padding-left: 8px; }
.sidetab svg { width: 6px; height: 10px; }
```
